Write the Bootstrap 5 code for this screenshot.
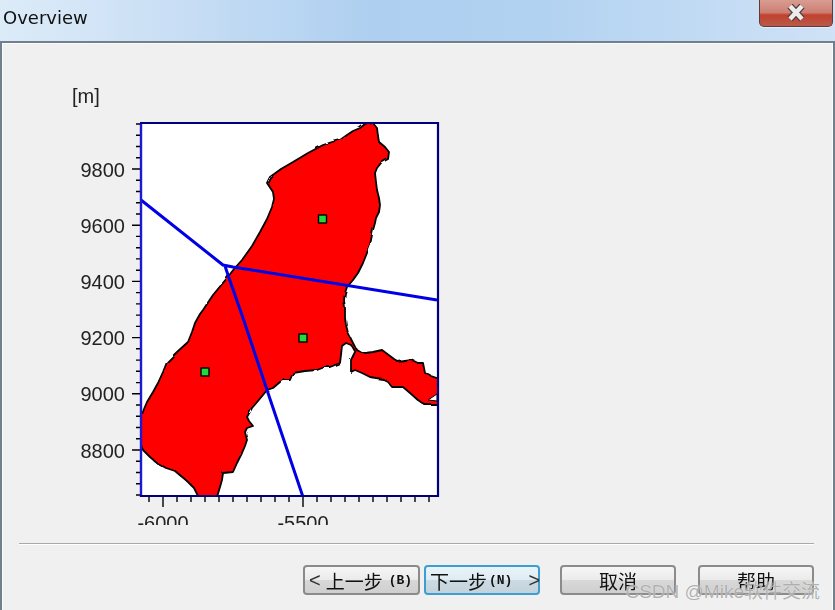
<!DOCTYPE html>
<html lang="en">
<head>
    <meta charset="UTF-8">
    <meta name="viewport" content="width=device-width, initial-scale=1.0">
    <title>Overview</title>
    <link href="https://cdn.jsdelivr.net/npm/bootstrap@5.3.0/dist/css/bootstrap.min.css" rel="stylesheet">
    <style>
        html, body {
            height: 100%;
            overflow: hidden;
            background: #f0f0f0;
        }
        .dialog-window {
            position: relative;
            width: 835px;
            height: 610px;
            overflow: hidden;
        }
        .title-bar {
            height: 41px;
            background: linear-gradient(90deg, #dcebf8 0%, #d2e4f6 12%, #aecff0 45%, #b2d2f1 65%, #cfe2f6 100%);
            font: 18px "DejaVu Sans", sans-serif;
            color: #111;
        }
        .title-text {
            padding: 7px 0 0 3px;
            filter: blur(.4px);
        }
        .close-btn {
            width: 74px;
            height: 27px;
            margin-right: 2px;
            border: 1px solid #5e3a38;
            border-top: 0;
            border-radius: 0 0 5px 5px;
            background: linear-gradient(180deg, #d99c91 0%, #cc7f73 48%, #c2412d 58%, #b85a4c 100%);
            box-shadow: 0 1px 0 #e4eef8;
        }
        .close-btn svg {
            filter: blur(.4px);
        }
        .main-panel {
            height: 569px;
            border: 2px solid #71808c;
            border-bottom: 0;
            background: #f0f0f0;
            box-shadow: inset 1px 1px 0 #fbfbfb, inset -1px 0 0 #fbfbfb;
        }
        .chart-area {
            padding: 37px 0 0 58px;
            height: 482px;
        }
        .chart-svg {
            display: block;
            filter: blur(.4px);
        }
        .axis-label {
            font: 20px "Liberation Sans", sans-serif;
            fill: #222;
        }
        .divider {
            height: 2px;
            margin: 18px 19px 0 17px;
            background: #a9a9a9;
            border-bottom: 1px solid #fff;
        }
        .button-row {
            padding: 20px 19px 0 0;
        }
        .wizard-btn {
            width: 116px;
            height: 30px;
            padding: 0;
            border: 2px solid #8b8b8b;
            border-radius: 4px;
            background: linear-gradient(180deg, #f6f6f6 0%, #ebebeb 48%, #d8d8d8 52%, #cfcfcf 100%);
            font: 19px "Noto Sans CJK SC", sans-serif;
            line-height: 25px;
            color: #111;
            white-space: nowrap;
        }
        .wizard-btn.is-default {
            border-color: #3d9fd0;
            background: linear-gradient(180deg, #e8f4fa 0%, #dfecf3 48%, #cbd9e2 52%, #c3d3dc 100%);
        }
        .wizard-btn > span {
            filter: blur(.4px);
        }
        .btn-back {
            width: 117px;
            padding-left: 4px;
        }
        .btn-next {
            padding-left: 4px;
        }
        .chev {
            font: 20px "Liberation Sans", sans-serif;
            color: #333;
        }
        .chev-back {
            margin-right: 5px;
        }
        .chev-next {
            margin-left: 16px;
        }
        .key-hint {
            font: 700 13px "Liberation Mono", monospace;
        }
        .hint-back {
            margin-left: 6px;
        }
        .hint-next {
            margin-left: 2px;
        }
        .gap-tight {
            margin-right: 4px;
        }
        .gap-mid {
            margin-right: 20px;
        }
        .gap-wide {
            margin-right: 22px;
        }
        .watermark {
            position: absolute;
            right: 15px;
            bottom: 7px;
            font: 19px "Liberation Sans", "Noto Sans CJK SC", sans-serif;
            color: rgba(125, 125, 125, .6);
            text-shadow: 0 0 1px #fff;
            white-space: nowrap;
        }
    </style>
</head>
<body>

<div class="dialog-window">
    <div class="title-bar d-flex justify-content-between align-items-start">
        <div class="title-text">Overview</div>
        <div class="close-btn d-flex justify-content-center align-items-start">
            <svg width="22" height="18" viewBox="0 0 22 18" class="mt-1">
                <path d="M5 2 17 15M17 2 5 15" stroke="#4f3a3a" stroke-width="7" fill="none"/>
                <path d="M5 2 17 15M17 2 5 15" stroke="#ececec" stroke-width="4.5" fill="none"/>
            </svg>
        </div>
    </div>

    <div class="main-panel">
        <div class="chart-area">
            <svg id="chart" class="chart-svg" width="390" height="445" viewBox="60 80 390 445">
                <defs>
                    <clipPath id="plotClip"><rect x="141" y="123" width="297" height="373"/></clipPath>
                    <filter id="rough" x="-5%" y="-5%" width="110%" height="110%">
                        <feTurbulence type="fractalNoise" baseFrequency="0.09" numOctaves="1" seed="4"/>
                        <feDisplacementMap in="SourceGraphic" scale="3"/>
                    </filter>
                </defs>
                <text class="axis-label" x="72" y="103">[m]</text>
                <rect x="141" y="123" width="297" height="373" fill="#fff"/>
                <g clip-path="url(#plotClip)">
                    <path filter="url(#rough)" fill="#f00" stroke="#000" stroke-width="1.8" stroke-linejoin="round" d="M372 122 377 128 378 136 379 142 385 147 389 152 388 159 381 163 377 168 375 173 376 182 377 190 379 198 380 205 379 212 376 218 375 223 373 230 372 235 370 245 367 253 363 263 358 273 353 280 347 287 345 293 344 300 345 308 345 318 346 325 348 333 352 341 356 349 361 352 365 353 373 352 382 350 390 356 398 362 405 361 412 360 418 363 423 363 425 373 431 376 442 380 442 405 425 405 418 400 410 393 403 387 392 387 387 381 383 379 376 378 370 377 362 373 355 370 351 372 351 360 355 352 351 345 346 343 342 346 341 355 340 363 330 367 325 367 317 370 305 371 293 373 290 380 284 380 280 382 273 388 267 390 263 395 258 401 252 408 247 417 249 421 253 426 247 428 245 432 247 440 245 446 242 453 237 463 233 472 223 473 222 480 220 487 216 500 200 500 194 488 188 482 175 471 166 468 157 463 150 457 143 450 140 442 140 420 144 409 147 402 153 392 158 383 163 372 167 362 177 352 188 342 192 332 195 323 200 314 203 310 213 295 227 278 234 269 242 260 252 246 260 232 267 219 272 207 274 199 273 192 267 183 270 177 281 169 293 162 308 153 323 145 332 142 340 140 347 135 353 131 360 128 365 124Z"/>
                    <path fill="#fff" stroke="#000" stroke-width="1" d="M428 400 437 394 437 401Z"/>
                    <path fill="none" stroke="#0000e6" stroke-width="3" d="M141 200 223 265 233 267 437 300M225 266 228 275 243 318 267 390 303 497"/>
                </g>
                <rect x="318.500" y="215" width="8" height="8" fill="#1fdc3c" stroke="#000" stroke-width="1.4"/>
                <rect x="299" y="334" width="8" height="8" fill="#1fdc3c" stroke="#000" stroke-width="1.4"/>
                <rect x="201" y="368" width="8" height="8" fill="#1fdc3c" stroke="#000" stroke-width="1.4"/>
                <g id="ticks" stroke="#000" stroke-width="1.4"></g>
                <path d="M141 123V497" stroke="#1a1ad2" stroke-width="2.4" fill="none"/>
                <path d="M140 123H438V496H140" stroke="#00007f" stroke-width="2.2" fill="none"/>
                <g id="labels"></g>
            </svg>
        </div>
        <div class="divider"></div>
        <div class="button-row d-flex justify-content-end">
            <button type="button" class="btn wizard-btn btn-back gap-tight d-flex align-items-center"><span class="chev chev-back">&lt;</span><span>上一步</span><span class="key-hint hint-back">(B)</span></button>
            <button type="button" class="btn wizard-btn btn-next is-default gap-mid d-flex align-items-center"><span>下一步</span><span class="key-hint hint-next">(N)</span><span class="chev chev-next">&gt;</span></button>
            <button type="button" class="btn wizard-btn gap-wide"><span>取消</span></button>
            <button type="button" class="btn wizard-btn"><span>帮助</span></button>
        </div>
    </div>

    <div class="watermark">CSDN @Mike软件交流</div>
</div>

<script>
    document.addEventListener('DOMContentLoaded', function () {
        const ticks = document.getElementById('ticks');
        const labels = document.getElementById('labels');
        let tickPath = '';
        let labelText = '';

        // y axis: 200 m = 56.2 px, 5 minor steps
        for (let i = -4; i <= 29; i++) {
            const y = 169 + i * 11.24;
            if (y < 123 || y > 497) continue;
            tickPath += 'M' + (i % 5 === 0 ? 132 : 136) + ' ' + y.toFixed(1) + 'H141';
        }
        [9800, 9600, 9400, 9200, 9000, 8800].forEach((v, n) => {
            labelText += '<text class="axis-label" text-anchor="end" x="125" y="' + (176.5 + n * 56.2) + '">' + v + '</text>';
        });

        // x axis: 500 m = 140 px, 10 minor steps
        for (let i = -1; i <= 19; i++) {
            const x = 163 + i * 14;
            tickPath += 'M' + x + ' 496V' + (i % 10 === 0 ? 507 : 502);
        }
        labelText += '<text class="axis-label" text-anchor="middle" x="163" y="530">-6000</text>';
        labelText += '<text class="axis-label" text-anchor="middle" x="303" y="530">-5500</text>';

        const tickEl = document.createElementNS('http://www.w3.org/2000/svg', 'path');
        tickEl.setAttribute('d', tickPath);
        ticks.appendChild(tickEl);
        labels.innerHTML = labelText;
    });
</script>

<script src="https://cdn.jsdelivr.net/npm/bootstrap@5.3.0/dist/js/bootstrap.bundle.min.js"></script>
</body>
</html>
